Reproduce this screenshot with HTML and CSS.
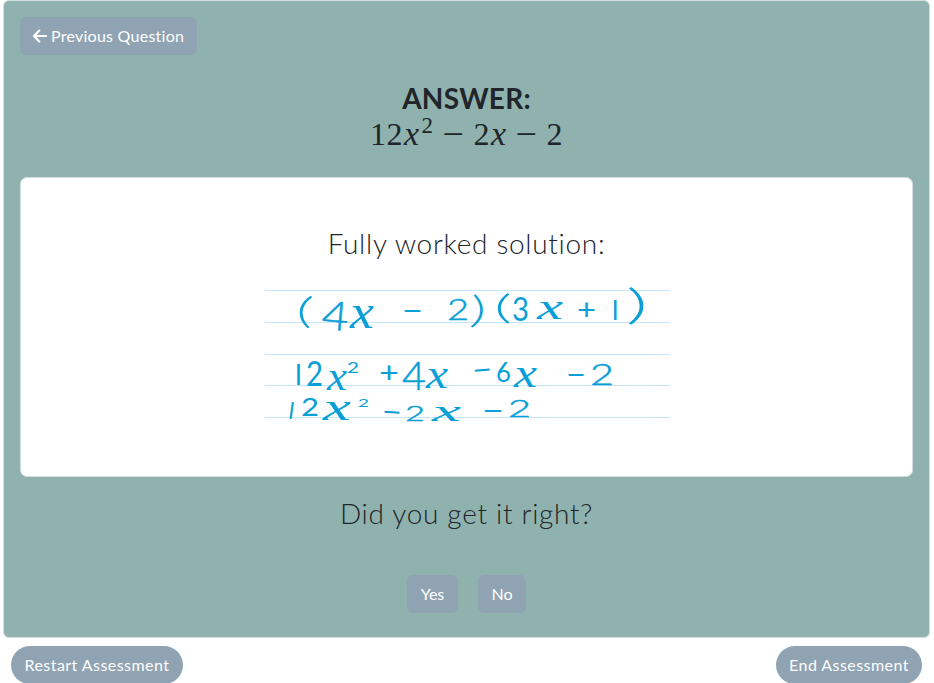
FILE: index.html
```html
<!DOCTYPE html>
<html lang="en">
<head>
<meta charset="utf-8">
<title>Assessment</title>
<link rel="stylesheet" href="styles.css">
</head>
<body>
<main class="panel">
  <button class="btn previous"><svg class="arrow" viewBox="0 0 15 14"><path d="M7.3 1.6 2 7l5.3 5.4M2.2 7H14"/></svg><span class="previous-label">Previous Question</span></button>
  <section class="answer">
    <h1>ANSWER:</h1>
    <div class="math"><span>12</span><i>x</i><sup>2</sup><span class="op">−</span><span>2</span><i>x</i><span class="op">−</span><span>2</span></div>
  </section>
  <section class="solution">
    <h2>Fully worked solution:</h2>
    <svg class="working" viewBox="264 280 407 150">
      <path class="rule" d="M265 290.5H670M265 322.5H670M265 354.5H670M265 385.5H670M265 417.5H670"/>
      <g class="ink">
        <text class="paren" x="296" y="323" font-size="36" textLength="17" lengthAdjust="spacingAndGlyphs" transform="rotate(5 304 313)">(</text>
        <text class="thin" x="322" y="330" font-size="40" textLength="27" lengthAdjust="spacingAndGlyphs" transform="rotate(5 335 315)">4</text>
        <text class="var" x="350" y="328" font-size="49" textLength="24" lengthAdjust="spacingAndGlyphs">x</text>
        <text x="402" y="321" font-size="30" textLength="21" lengthAdjust="spacingAndGlyphs">−</text>
        <text class="thin" x="447" y="320" font-size="29" textLength="22" lengthAdjust="spacingAndGlyphs">2</text>
        <text class="paren" x="470" y="323" font-size="37" textLength="16" lengthAdjust="spacingAndGlyphs" transform="rotate(5 479 312)">)</text>
        <text class="paren" x="494" y="319" font-size="34" textLength="18" lengthAdjust="spacingAndGlyphs">(</text>
        <text x="512" y="321" font-size="33" textLength="17" lengthAdjust="spacingAndGlyphs">3</text>
        <text class="var" x="537" y="319" font-size="36" textLength="26" lengthAdjust="spacingAndGlyphs">x</text>
        <text x="577" y="320" font-size="28" textLength="19" lengthAdjust="spacingAndGlyphs">+</text>
        <text x="612" y="320" font-size="27">l</text>
        <text class="paren" x="626" y="319" font-size="41" textLength="22" lengthAdjust="spacingAndGlyphs">)</text>

        <text x="295" y="385" font-size="29">l</text>
        <text x="306" y="386" font-size="34" textLength="17" lengthAdjust="spacingAndGlyphs">2</text>
        <text class="var" x="327" y="390" font-size="43" textLength="20" lengthAdjust="spacingAndGlyphs">x</text>
        <text x="347" y="373" font-size="16" textLength="12" lengthAdjust="spacingAndGlyphs">2</text>
        <text x="379" y="383" font-size="29" textLength="20" lengthAdjust="spacingAndGlyphs">+</text>
        <text class="thin" x="402" y="390" font-size="39" textLength="24" lengthAdjust="spacingAndGlyphs">4</text>
        <text class="var" x="426" y="388" font-size="43" textLength="22" lengthAdjust="spacingAndGlyphs">x</text>
        <text x="472" y="380" font-size="29" textLength="20" lengthAdjust="spacingAndGlyphs" transform="rotate(-5 482 370)">−</text>
        <text x="496" y="382" font-size="27" textLength="15" lengthAdjust="spacingAndGlyphs">6</text>
        <text class="var" x="514" y="387" font-size="42" textLength="23" lengthAdjust="spacingAndGlyphs">x</text>
        <text x="566" y="385" font-size="29" textLength="20" lengthAdjust="spacingAndGlyphs">−</text>
        <text class="thin" x="590" y="385" font-size="29" textLength="24" lengthAdjust="spacingAndGlyphs">2</text>

        <text x="289" y="419" font-size="23" transform="rotate(8 292 410)">l</text>
        <text x="301" y="416" font-size="25" textLength="18" lengthAdjust="spacingAndGlyphs">2</text>
        <text class="var" x="323" y="420" font-size="38" textLength="28" lengthAdjust="spacingAndGlyphs">x</text>
        <text x="358" y="407" font-size="12" textLength="11" lengthAdjust="spacingAndGlyphs">2</text>
        <text x="382" y="422" font-size="29" textLength="20" lengthAdjust="spacingAndGlyphs" transform="rotate(4 392 412)">−</text>
        <text class="thin" x="405" y="421" font-size="22" textLength="20" lengthAdjust="spacingAndGlyphs">2</text>
        <text class="var" x="432" y="421" font-size="30" textLength="29" lengthAdjust="spacingAndGlyphs">x</text>
        <text x="482" y="421" font-size="29" textLength="22" lengthAdjust="spacingAndGlyphs">−</text>
        <text class="thin" x="508" y="417" font-size="23" textLength="23" lengthAdjust="spacingAndGlyphs">2</text>
      </g>
    </svg>
  </section>
  <h2 class="question">Did you get it right?</h2>
  <div class="choices"><button class="btn yes">Yes</button><button class="btn no">No</button></div>
</main>
<footer class="footer"><button class="btn pill restart">Restart Assessment</button><button class="btn pill end">End Assessment</button></footer>
</body>
</html>
```

FILE: styles.css
```css
* { box-sizing: border-box; }
html { overflow: hidden; }
body { margin: 0; padding: 0 4px 0 3px; background: #fff; color: #212529; font: 16px/24px Lato, sans-serif; height: 683px; overflow: hidden; }
.panel { height: 638px; padding: 16px; border: 1px solid #d5dedd; border-radius: 6px; background: #8fb2af; display: flex; flex-direction: column; align-items: center; }
.btn { height: 38px; flex: none; border: 0; border-radius: 6px; background: #8fa3b3; color: #fff; font: 16px/24px Lato, sans-serif; padding: 0; white-space: nowrap; }
.previous { align-self: flex-start; width: 177px; display: flex; align-items: center; padding-left: 12px; }
.arrow { width: 15px; height: 14px; margin-right: 4px; margin-top: -1px; fill: none; stroke: #fff; stroke-width: 2.2; stroke-linecap: round; stroke-linejoin: round; }
.previous-label { letter-spacing: .25px; }
.answer { height: 122px; padding-top: 26px; text-align: center; }
h1 { margin: 0; font: 700 28px/34px Lato, sans-serif; letter-spacing: .25px; }
.math { display: flex; justify-content: center; font: 32px/38px "Liberation Serif", serif; letter-spacing: .5px; }
.math i { margin-left: 1px; font-size: 34px; }
.math sup { font-size: 23px; line-height: 22px; margin-left: 2px; }
.math .op { margin: 0 9px; font-size: 38px; line-height: 38px; }
.solution { width: 893px; height: 300px; flex: none; border: 1px solid #d5dedd; border-radius: 7px; background: #fff; display: flex; flex-direction: column; align-items: center; padding-top: 48px; }
h2 { margin: 0; font: 300 28px/34px Lato, sans-serif; letter-spacing: .7px; }
.working { width: 407px; height: 150px; margin-top: 20px; margin-left: 2px; flex: none; }
.rule { stroke: #c5e6fa; stroke-width: 1; }
.ink { font-family: Lato, sans-serif; fill: #0b9fd8; }
.var { font-family: "Liberation Serif", serif; font-style: italic; }
.thin { font-weight: 300; stroke: #0b9fd8; stroke-width: .5; }
.paren { font-weight: 300; }
.question { margin-top: 19px; }
.choices { display: flex; gap: 20px; margin-top: 45px; }
.yes { width: 51px; }
.no { width: 48px; }
.footer { display: flex; justify-content: space-between; padding: 8px 8px 0; }
.pill { border-radius: 19px; letter-spacing: .45px; }
.restart { width: 172px; }
.end { width: 146px; }
```
